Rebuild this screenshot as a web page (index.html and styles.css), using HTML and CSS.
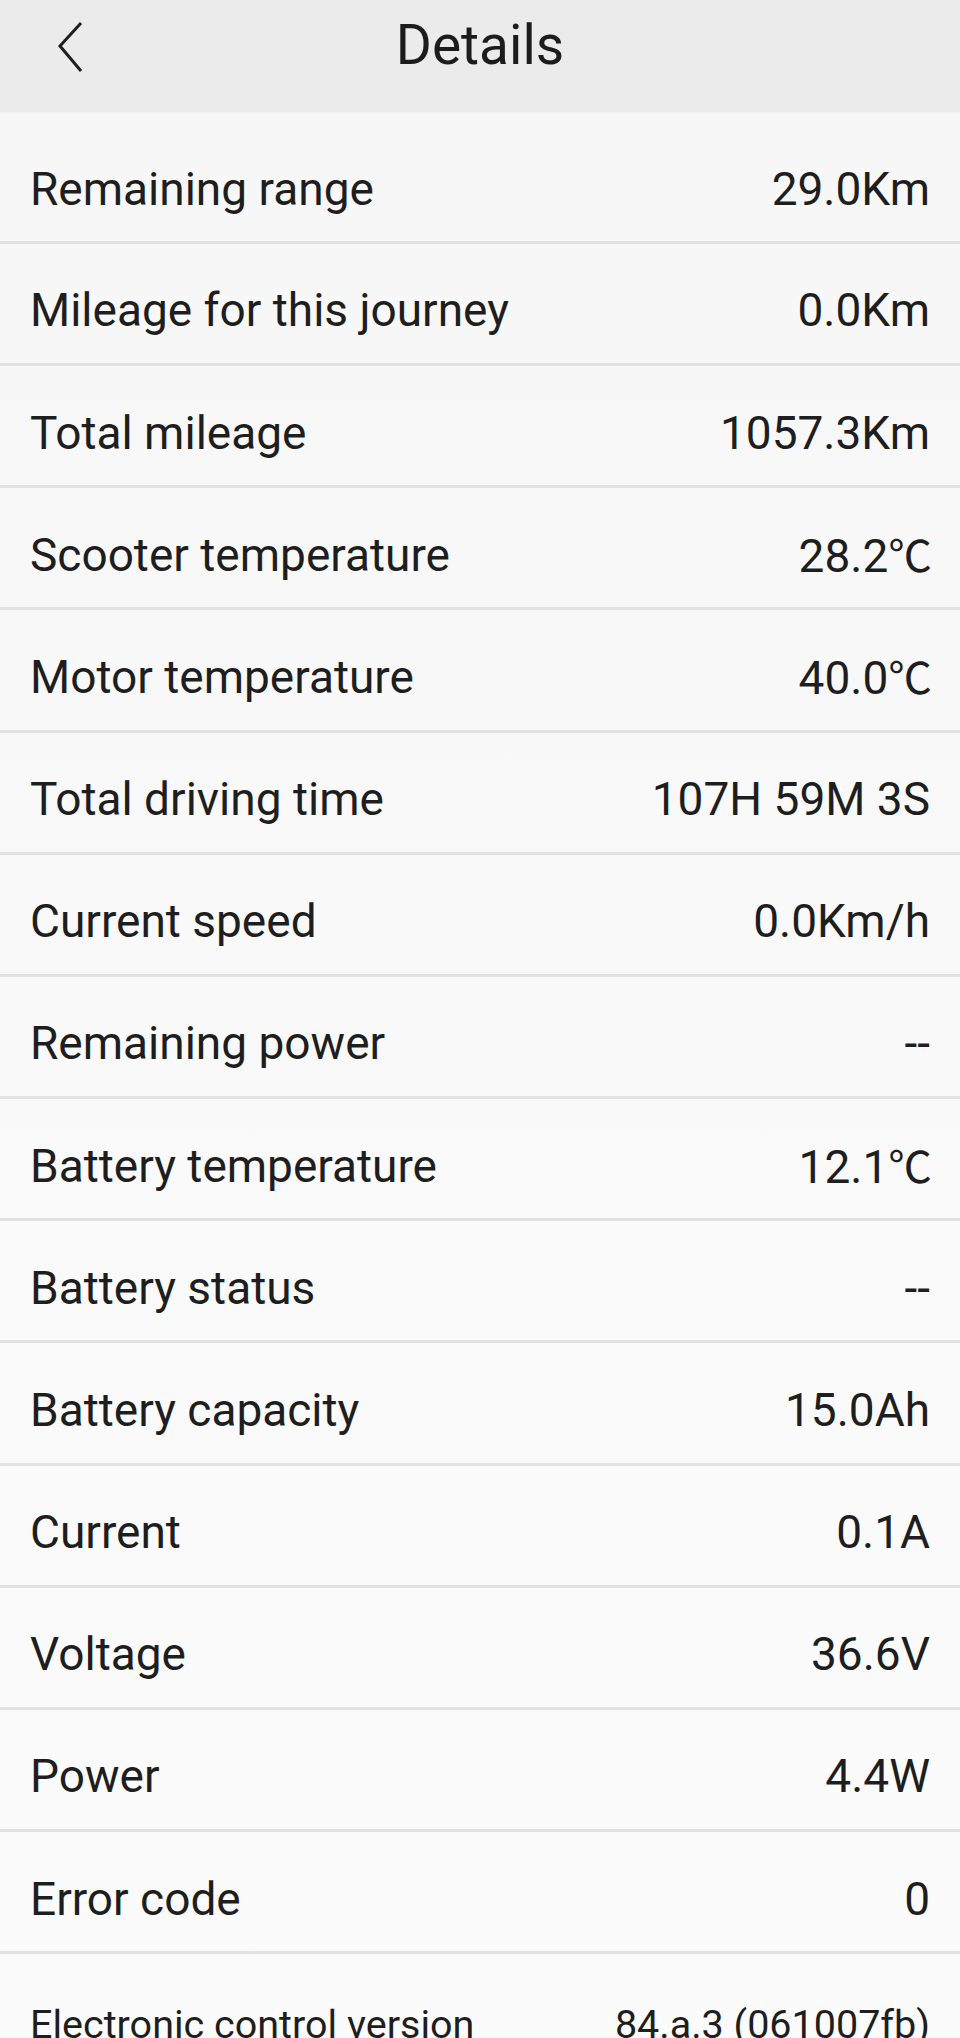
FILE: index.html
```html
<!DOCTYPE html>
<html lang="en">
<head>
<meta charset="utf-8">
<title>Details</title>
<link rel="stylesheet" href="styles.css">
</head>
<body>
<div class="page">
  <header class="topbar">
    <button class="back" aria-label="Back">
      <svg width="26" height="52" viewBox="0 0 26 52"><path d="M23 2 L2 25 L23 50" fill="none" stroke="#1e1e1e" stroke-width="3" stroke-linejoin="miter"/></svg>
    </button>
    <h1 class="title">Details</h1>
  </header>
  <ul class="list">
    <li class="row"><span class="label">Remaining range</span><span class="value">29.0Km</span></li>
    <li class="row"><span class="label">Mileage for this journey</span><span class="value">0.0Km</span></li>
    <li class="row"><span class="label">Total mileage</span><span class="value">1057.3Km</span></li>
    <li class="row"><span class="label">Scooter temperature</span><span class="value">28.2<span class="deg">℃</span></span></li>
    <li class="row"><span class="label">Motor temperature</span><span class="value">40.0<span class="deg">℃</span></span></li>
    <li class="row"><span class="label">Total driving time</span><span class="value">107H 59M 3S</span></li>
    <li class="row"><span class="label">Current speed</span><span class="value">0.0Km/h</span></li>
    <li class="row"><span class="label">Remaining power</span><span class="value">--</span></li>
    <li class="row"><span class="label">Battery temperature</span><span class="value">12.1<span class="deg">℃</span></span></li>
    <li class="row"><span class="label">Battery status</span><span class="value">--</span></li>
    <li class="row"><span class="label">Battery capacity</span><span class="value">15.0Ah</span></li>
    <li class="row"><span class="label">Current</span><span class="value">0.1A</span></li>
    <li class="row"><span class="label">Voltage</span><span class="value">36.6V</span></li>
    <li class="row"><span class="label">Power</span><span class="value">4.4W</span></li>
    <li class="row"><span class="label">Error code</span><span class="value">0</span></li>
    <li class="row row-small"><span class="label">Electronic control version</span><span class="value">84.a.3 (061007fb)</span></li>
  </ul>
</div>
</body>
</html>
```
FILE: styles.css
```css
html, body {
  margin: 0;
  padding: 0;
  background: #fafafa;
}
body {
  font-family: Roboto, "Noto Sans", "Noto Sans CJK SC", sans-serif;
  color: #1e1e1e;
}
.page {
  width: 960px;
  height: 2038px;
  overflow: hidden;
}
.topbar {
  position: relative;
  height: 112px;
  box-sizing: border-box;
  padding-bottom: 22px;
  background: #ebebeb;
  display: flex;
  align-items: center;
  justify-content: center;
}
.back {
  position: absolute;
  left: 58px;
  top: 21px;
  padding: 0;
  border: 0;
  background: none;
  display: flex;
}
.title {
  margin: 0;
  font-weight: 400;
  font-size: 55px;
  color: #1c1c1c;
  line-height: 1.2;
}
.list {
  list-style: none;
  margin: 0;
  padding: 0;
  background: linear-gradient(#f7f7f7, #fbfbfb);
  border-top: 2px solid #f4f4f4;
}
.row {
  box-sizing: border-box;
  height: 122.17px;
  padding: 15px 30px 0 30px;
  border-bottom: 3px solid #e2e2e2;
  display: flex;
  align-items: center;
  justify-content: space-between;
  font-size: 46px;
  line-height: 1.2;
}
.row:first-child {
  height: 130px;
  padding-top: 25px;
}
.row-small {
  font-size: 39.5px;
  padding-top: 18px;
  border-bottom: 0;
}
.value {
  text-align: right;
  white-space: nowrap;
}
.deg {
  font-family: "Noto Sans CJK SC", "DejaVu Sans", sans-serif;
  font-size: 0.95em;
  letter-spacing: -2px;
}
```
